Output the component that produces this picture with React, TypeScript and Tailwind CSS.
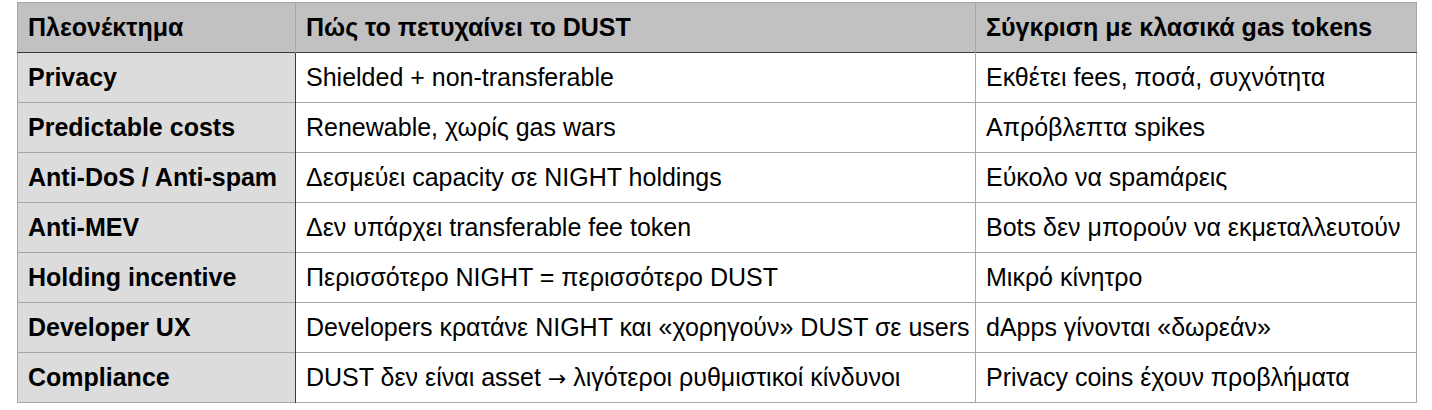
import React from "react";

const Arrow = () => (
  <span style={{ fontFamily: '"DejaVu Sans", sans-serif' }} className="text-[22px]">
    →
  </span>
);

const rows: [string, React.ReactNode, string][] = [
  ["Privacy", "Shielded + non-transferable", "Εκθέτει fees, ποσά, συχνότητα"],
  ["Predictable costs", "Renewable, χωρίς gas wars", "Απρόβλεπτα spikes"],
  ["Anti-DoS / Anti-spam", "Δεσμεύει capacity σε NIGHT holdings", "Εύκολο να spamάρεις"],
  ["Anti-MEV", "Δεν υπάρχει transferable fee token", "Bots δεν μπορούν να εκμεταλλευτούν"],
  ["Holding incentive", "Περισσότερο NIGHT = περισσότερο DUST", "Μικρό κίνητρο"],
  ["Developer UX", "Developers κρατάνε NIGHT και «χορηγούν» DUST σε users", "dApps γίνονται «δωρεάν»"],
  [
    "Compliance",
    <>
      DUST δεν είναι asset <Arrow /> λιγότεροι ρυθμιστικοί κίνδυνοι
    </>,
    "Privacy coins έχουν προβλήματα",
  ],
];

const App = () => {
  return (
    <div
      className="w-full min-h-screen bg-white pl-[17px] pt-[2px] text-[25px] text-black"
      style={{ fontFamily: '"Liberation Sans", Arial, sans-serif' }}
    >
      <table className="border-collapse table-fixed w-[1400px] border border-[#a6a6a6]">
        <colgroup>
          <col className="w-[278px]" />
          <col className="w-[680px]" />
          <col />
        </colgroup>
        <thead>
          <tr className="h-[50px] bg-[#c0c1c0] border-b-[1.5px] border-b-[#3a3a3a]">
            <th className="text-left font-bold px-[10px] border-r border-[#a6a6a6]">Πλεονέκτημα</th>
            <th className="text-left font-bold px-[10px] border-r border-[#a6a6a6]">Πώς το πετυχαίνει το DUST</th>
            <th className="text-left font-bold px-[10px]">Σύγκριση με κλασικά gas tokens</th>
          </tr>
        </thead>
        <tbody>
          {rows.map((row) => (
            <tr key={row[0]} className="h-[50px] border-t border-[#a6a6a6]">
              <td className="bg-[#dcdcdc] font-bold px-[10px] border-r border-r-[#3a3a3a] whitespace-nowrap">
                {row[0]}
              </td>
              <td className="px-[10px] border-r border-[#a6a6a6] whitespace-nowrap">{row[1]}</td>
              <td className="px-[10px] whitespace-nowrap">{row[2]}</td>
            </tr>
          ))}
        </tbody>
      </table>
    </div>
  );
};

export default App;
